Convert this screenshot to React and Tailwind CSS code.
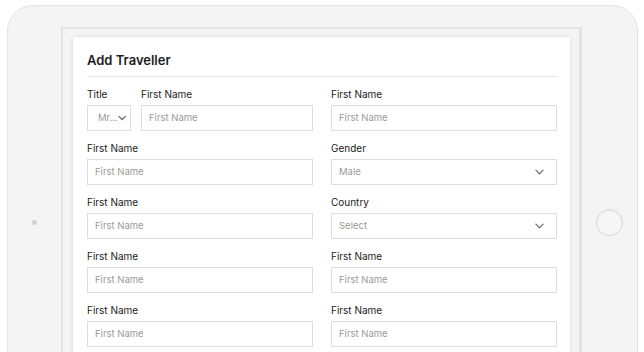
function Chevron({ className = '' }) {
  return (
    <svg viewBox="0 0 10 6" className={className} fill="none" stroke="currentColor" strokeWidth="1.3" strokeLinecap="round" strokeLinejoin="round">
      <path d="M1 1l4 4 4-4" />
    </svg>
  );
}

function Field({ label, placeholder, select }) {
  return (
    <div className="flex flex-col">
      <label className="h-[14px] text-[10px] leading-[14px] text-[#222]">{label}</label>
      <div className="mt-[4px] flex h-[26px] items-center justify-between border border-[#dedede] bg-white pl-[7px] pr-[12px]">
        <span className="text-[9.5px] text-[#9a9a9a]">{placeholder}</span>
        {select && <Chevron className="h-[6px] w-[9px] text-[#666]" />}
      </div>
    </div>
  );
}

export default function App() {
  return (
    <div className="h-[352px] w-[644px] overflow-hidden bg-white pl-[7px] pt-[5px] font-['Inter',sans-serif]">
      <div className="flex h-[360px] w-[631px] rounded-t-[26px] border border-[#e4e4e4] bg-[#f4f4f4] pt-[21px]">
        <div className="flex w-[53px] justify-center pt-[193px]">
          <div className="h-[5px] w-[5px] rounded-full bg-[#d2d2d2]" />
        </div>
        <div className="w-[521px] border-2 border-r-[3px] border-[#e3e3e3] pl-[10px] pr-[9px] pt-[8px]">
          <div className="h-[340px] bg-white pl-[14px] pr-[13px] pt-[14px] shadow-[0_0_4px_rgba(0,0,0,0.12)]">
            <h2 className="pb-[7px] text-[13px] font-semibold leading-[18px] text-[#1e1e1e]">Add Traveller</h2>
            <div className="border-t border-[#e4e4e4]" />
            <div className="mt-[10px] grid grid-cols-2 gap-x-[18px] gap-y-[10px]">
              <div className="flex gap-[10px]">
                <div className="flex w-[44px] flex-col">
                  <label className="h-[14px] text-[10px] leading-[14px] text-[#222]">Title</label>
                  <div className="mt-[4px] flex h-[26px] items-center justify-between border border-[#dedede] bg-white pl-[10px] pr-[4px]">
                    <span className="text-[9.5px] text-[#9a9a9a]">Mr...</span>
                    <Chevron className="h-[6px] w-[9px] text-[#555]" />
                  </div>
                </div>
                <div className="flex-1">
                  <Field label="First Name" placeholder="First Name" />
                </div>
              </div>
              <Field label="First Name" placeholder="First Name" />
              <Field label="First Name" placeholder="First Name" />
              <Field label="Gender" placeholder="Male" select />
              <Field label="First Name" placeholder="First Name" />
              <Field label="Country" placeholder="Select" select />
              <Field label="First Name" placeholder="First Name" />
              <Field label="First Name" placeholder="First Name" />
              <Field label="First Name" placeholder="First Name" />
              <Field label="First Name" placeholder="First Name" />
            </div>
          </div>
        </div>
        <div className="flex flex-1 justify-center pt-[182px]">
          <div className="h-[27px] w-[27px] rounded-full border border-[#d8d8d8] bg-[#f7f7f7] shadow-[inset_0_1px_2px_rgba(0,0,0,0.08)]" />
        </div>
      </div>
    </div>
  );
}
